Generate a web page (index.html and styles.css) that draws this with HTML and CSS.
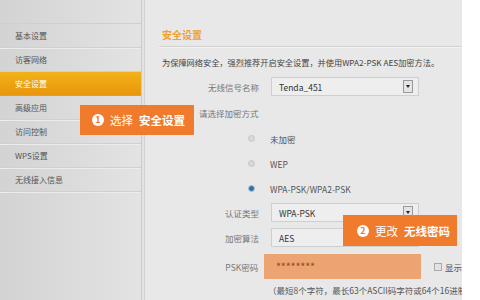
FILE: index.html
```html
<!DOCTYPE html>
<html lang="zh-CN">
<head>
<meta charset="utf-8">
<title>安全设置</title>
<link rel="stylesheet" href="styles.css">
</head>
<body>
<div class="page">
  <aside class="sidebar">
    <div class="side-top"></div>
    <div class="nav-item">基本设置</div>
    <div class="nav-item">访客网络</div>
    <div class="nav-item active">安全设置</div>
    <div class="nav-item">高级应用</div>
    <div class="nav-item">访问控制</div>
    <div class="nav-item">WPS设置</div>
    <div class="nav-item">无线接入信息</div>
  </aside>
  <main class="content">
    <div class="title">安全设置</div>
    <p class="desc">为保障网络安全，强烈推荐开启安全设置，并使用WPA2-PSK AES加密方法。</p>
    <div class="row">
      <span class="label">无线信号名称</span>
      <div class="select"><span>Tenda_451</span><i class="arrow"></i></div>
    </div>
    <div class="subhead">请选择加密方式</div>
    <div class="radio-row"><span class="radio"></span><span>未加密</span></div>
    <div class="radio-row"><span class="radio"></span><span>WEP</span></div>
    <div class="radio-row"><span class="radio checked"></span><span>WPA-PSK/WPA2-PSK</span></div>
    <div class="row r2">
      <span class="label">认证类型</span>
      <div class="select"><span>WPA-PSK</span><i class="arrow"></i></div>
    </div>
    <div class="row r3">
      <span class="label">加密算法</span>
      <div class="select"><span>AES</span><i class="arrow"></i></div>
    </div>
    <div class="row r4">
      <span class="label">PSK密码</span>
      <div class="psk">********</div>
      <span class="check"></span><span class="show">显示</span>
    </div>
    <div class="note">（最短8个字符，最长63个ASCII码字符或64个16进制</div>
  </main>
</div>
<div class="callout c1"><span class="num">1</span><span class="ct">选择</span><b>安全设置</b></div>
<div class="callout c2"><span class="num">2</span><span class="ct">更改</span><b>无线密码</b></div>
</body>
</html>
```

FILE: styles.css
```css
* { box-sizing: border-box; }
html, body { margin: 0; padding: 0; }
body {
  width: 480px;
  height: 300px;
  overflow: hidden;
  background: #ffffff;
  font-family: "Noto Sans CJK SC", "Noto Sans", sans-serif;
  position: relative;
}
.page {
  display: flex;
  width: 462px;
  height: 300px;
  background: #e3e3e3;
}
.sidebar {
  width: 142px;
  height: 300px;
  background: linear-gradient(to right, #d3d3d3, #e3e3e3);
  border-right: 1px solid #cbcbcb;
}
.side-top {
  height: 24px;
  border-bottom: 1px solid #cfcfcf;
}
.nav-item {
  height: 24px;
  line-height: 23px;
  padding-left: 15px;
  font-size: 8px;
  color: #555;
  border-bottom: 1px solid #d0d0d0;
  box-shadow: 0 1px 0 #ececec;
}
.nav-item.active {
  background: linear-gradient(to bottom, #f2b219, #e8960c);
  color: #fff;
  border-bottom-color: #e0a030;
  box-shadow: none;
}
.content {
  flex: 1;
  margin-left: 2px;
  border-left: 1px solid #d3d3d3;
  background: #e8e8e8;
  padding: 27px 0 0 14px;
  overflow: hidden;
  font-size: 8.5px;
  color: #555;
}
.title {
  padding-left: 3px;
  line-height: 16px;
  padding-bottom: 3px;
  font-size: 10px;
  color: #efa030;
  font-weight: bold;
  border-bottom: 1px solid #d2d2d2;
  box-shadow: 0 1px 0 #f2f2f2;
}
.desc {
  margin: 8px 0 0 3px;
  line-height: 14px;
  font-size: 8.2px;
  color: #444;
  white-space: nowrap;
}
.row {
  display: flex;
  align-items: center;
  margin-top: 8px;
  height: 19px;
  padding-left: 3px;
}
.label {
  width: 97px;
  text-align: right;
  color: #777;
  margin-right: 12px;
  white-space: nowrap;
}
.select {
  width: 148px;
  height: 19px;
  border: 1px solid #cfcfcf;
  background: #eeeeee;
  display: flex;
  align-items: center;
  justify-content: space-between;
  padding: 0 5px 0 7px;
  color: #333;
}
.arrow {
  width: 10px;
  height: 13px;
  border: 1px solid #999;
  background: #e4e4e4;
  position: relative;
}
.arrow::after {
  content: "";
  position: absolute;
  left: 2px;
  top: 4px;
  border-left: 2px solid transparent;
  border-right: 2px solid transparent;
  border-top: 3px solid #222;
}
.subhead {
  margin: 10px 0 0 40px;
  line-height: 14px;
  color: #777;
}
.subhead + .radio-row { margin-top: 6px; }
.radio-row {
  display: flex;
  align-items: center;
  height: 25px;
  padding-left: 89px;
  color: #555;
}
.radio {
  width: 7px;
  height: 7px;
  border-radius: 50%;
  background: #d8d8d8;
  border: 1px solid #c6c6c6;
  margin-right: 15px;
}
.radio.checked {
  background: radial-gradient(circle, #2a6fb0 0 2px, #8fb4d6 3px);
  border-color: #9ab0c4;
}
.r2 { margin-top: 2px; }
.r3 { margin-top: 6px; }
.r4 { margin-top: 7px; height: 25px; }
.psk {
  width: 158px;
  height: 25px;
  margin-left: -6px;
  background: #eca572;
  color: #9a4f28;
  padding-left: 12px;
  line-height: 25px;
  font-size: 9px;
  font-weight: bold;
  letter-spacing: 0.3px;
}
.check {
  width: 8px;
  height: 8px;
  border: 1px solid #aaa;
  background: #e2e2e2;
  margin-left: 13px;
}
.show {
  margin-left: 3px;
  color: #555;
  white-space: nowrap;
}
.note {
  margin: 4px 0 0 109px;
  line-height: 14px;
  color: #555;
  white-space: nowrap;
}
.callout {
  position: absolute;
  display: flex;
  align-items: center;
  background: #f07b2c;
  color: #fff;
  font-size: 11.5px;
  white-space: nowrap;
}
.callout b { font-weight: bold; margin-left: 6px; }
.c1 { left: 80px; top: 105px; width: 114px; height: 30px; padding-left: 12px; }
.c2 { left: 343px; top: 215px; width: 114px; height: 31px; padding-left: 14px; }
.num {
  width: 12px;
  height: 12px;
  border-radius: 50%;
  background: #fff;
  color: #f07b2c;
  font-size: 9px;
  font-weight: bold;
  line-height: 12px;
  text-align: center;
  margin-right: 6px;
}
```
